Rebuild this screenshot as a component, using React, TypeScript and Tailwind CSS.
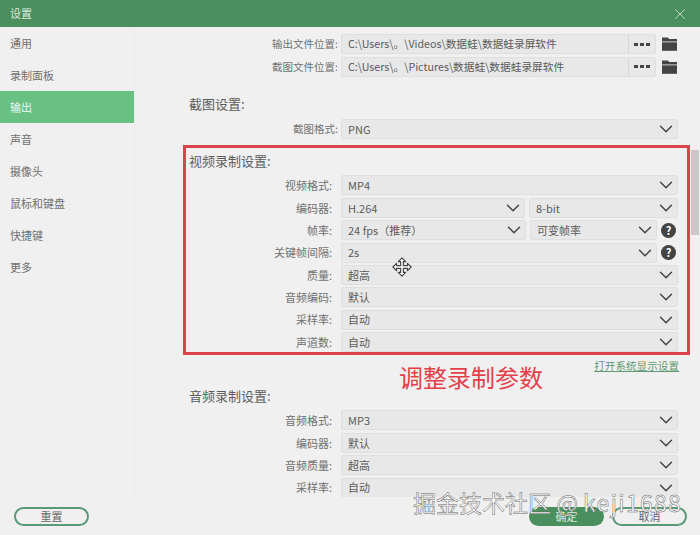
import React from "react";
import { ChevronDown, X } from "lucide-react";

const NAV = ["通用", "录制面板", "输出", "声音", "摄像头", "鼠标和键盘", "快捷键", "更多"];

const Help = () => (
	<div className="w-[15px] h-[15px] rounded-full bg-[#444444] text-white text-[11px] font-bold leading-[15px] text-center shrink-0">
		?
	</div>
);

const Folder = () => (
	<svg width="15" height="14" viewBox="0 0 15 14" className="shrink-0">
		<path d="M0 0.500h6l1 1.500h8v2.500H0z" fill="#444444" />
		<rect x="0" y="5.300" width="15" height="8.500" fill="#444444" />
	</svg>
);

const MoveCursor = () => (
	<svg width="20" height="20" viewBox="-1 -1 22 22" className="absolute left-[392px] top-[257px]">
		<polygon
			points="10,0 14,4 11.500,4 11.500,8.500 16,8.500 16,6 20,10 16,14 16,11.500 11.500,11.500 11.500,16 14,16 10,20 6,16 8.500,16 8.500,11.500 4,11.500 4,14 0,10 4,6 4,8.500 8.500,8.500 8.500,4 6,4"
			fill="#ffffff"
			stroke="#444444"
			strokeWidth="1.300"
			strokeLinejoin="round"
		/>
	</svg>
);

const Select = ({ value, className = "" }: { value: string; className?: string }) => (
	<div
		className={`h-[20px] flex items-center justify-between pl-[6px] bg-[#e8e8e8] border border-[#dfdfdf] rounded-[2px] text-[11px] text-[#5c5c5c] ${className}`}
	>
		<span>{value}</span>
		<ChevronDown size={22} strokeWidth={1.600} className="text-[#444444] -my-[2px]" />
	</div>
);

// labels of the top block sit closer to the fields than the ones in the recording blocks
const Row = ({ label, wide, children }: { label: string; wide?: boolean; children: React.ReactNode }) => (
	<div className="h-[22.4px] flex items-center">
		<div
			className={
				wide
					? "w-[197px] mr-[9px] text-right text-[11px] text-[#707070] shrink-0"
					: "w-[203px] mr-[3px] text-right text-[10.5px] text-[#707070] shrink-0"
			}
		>
			{label}:
		</div>
		<div className="flex-1 flex items-center min-w-0">{children}</div>
	</div>
);

const PathRow = ({ label, value }: { label: string; value: string }) => (
	<Row label={label}>
		<div className="w-[315px] h-[20px] flex items-center bg-[#e8e8e8] border border-[#dfdfdf] rounded-[2px] text-[10.7px] text-[#5c5c5c]">
			<span className="flex-1 pl-[6px]">{value}</span>
			<div className="w-[27px] h-full border-l border-[#d6d6d6] flex items-center justify-center gap-[2px]">
				<i className="w-[4px] h-[3px] bg-[#444444]" />
				<i className="w-[4px] h-[3px] bg-[#444444]" />
				<i className="w-[4px] h-[3px] bg-[#444444]" />
			</div>
		</div>
		<div className="ml-[6px]">
			<Folder />
		</div>
	</Row>
);

const Heading = ({ text, className = "" }: { text: string; className?: string }) => (
	<div className={`h-[20px] pl-[54px] text-[13px] leading-[18px] text-[#5c5c5c] ${className}`}>{text}:</div>
);

const App = () => {
	return (
		<div className="relative w-[700px] h-[535px] overflow-hidden flex flex-col bg-[#f0f0f0] font-['Noto_Sans_CJK_SC','Noto_Sans',sans-serif]">
			<div className="h-[27px] shrink-0 bg-[#4c8f5f] flex items-center justify-between pl-[10px] pr-[11px] text-white text-[11px]">
				<span className="text-[#d8eadd]">设置</span>
				<X size={18} strokeWidth={1} className="text-[#d8eadd]" />
			</div>

			<div className="h-[470px] shrink-0 flex overflow-hidden">
				<div className="w-[135px] shrink-0 border-r border-[#ebebeb]">
					{NAV.map((item) => (
						<div
							key={item}
							className={`h-[32px] w-[134px] pl-[10px] flex items-center text-[11px] ${
								item === "输出" ? "bg-[#68c183] text-[#eef8f1]" : "text-[#707070]"
							}`}
						>
							{item}
						</div>
					))}
				</div>

				<div className="flex-1 pr-[22px] pt-[6px] min-w-0">
					<PathRow label="输出文件位置" value="C:\Users\。\Videos\数据蛙\数据蛙录屏软件" />
					<PathRow label="截图文件位置" value="C:\Users\。\Pictures\数据蛙\数据蛙录屏软件" />

					<Heading text="截图设置" className="mt-[17px]" />
					<div className="mt-[3px]">
						<Row label="截图格式">
							<Select value="PNG" className="flex-1" />
						</Row>
					</div>

					<Heading text="视频录制设置" className="mt-[12px]" />
					<div className="mt-[2px]">
						<Row wide label="视频格式">
							<Select value="MP4" className="flex-1" />
						</Row>
						<Row wide label="编码器">
							<Select value="H.264" className="w-[184px]" />
							<Select value="8-bit" className="ml-[4px] flex-1" />
						</Row>
						<Row wide label="帧率">
							<Select value="24 fps（推荐）" className="w-[185px]" />
							<Select value="可变帧率" className="ml-[4px] w-[127px]" />
							<div className="ml-[4px]">
								<Help />
							</div>
						</Row>
						<Row wide label="关键帧间隔">
							<Select value="2s" className="w-[316px]" />
							<div className="ml-[4px]">
								<Help />
							</div>
						</Row>
						<Row wide label="质量">
							<Select value="超高" className="flex-1" />
						</Row>
						<Row wide label="音频编码">
							<Select value="默认" className="flex-1" />
						</Row>
						<Row wide label="采样率">
							<Select value="自动" className="flex-1" />
						</Row>
						<Row wide label="声道数">
							<Select value="自动" className="flex-1" />
						</Row>
					</div>

					<div className="mt-[6px] -mr-[1px] h-[14px] text-right text-[10.6px] leading-[14px] text-[#5f9a72] underline">
						打开系统显示设置
					</div>

					<Heading text="音频录制设置" className="mt-[14px]" />
					<div className="mt-[2px]">
						<Row wide label="音频格式">
							<Select value="MP3" className="flex-1" />
						</Row>
						<Row wide label="编码器">
							<Select value="默认" className="flex-1" />
						</Row>
						<Row wide label="音频质量">
							<Select value="超高" className="flex-1" />
						</Row>
						<Row wide label="采样率">
							<Select value="自动" className="flex-1" />
						</Row>
					</div>
				</div>
			</div>

			<div className="flex-1 flex items-center justify-between pl-[14px] pr-[13px]">
				<button className="w-[75px] h-[19px] rounded-full border-2 border-[#5a9a78] text-[11px] leading-none text-[#666666]">
					重置
				</button>
				<div className="flex gap-[8px]">
					<button className="w-[75px] h-[19px] rounded-full bg-[#4c8f5f] text-[11px] leading-none text-[#d8eadd]">
						确定
					</button>
					<button className="w-[75px] h-[19px] rounded-full border-2 border-[#5a9a78] text-[11px] leading-none text-[#666666]">
						取消
					</button>
				</div>
			</div>

			{/* annotation layer */}
			<div className="absolute left-[691px] top-[150px] w-[8px] h-[85px] bg-[#c9c9c9]" />
			<div className="absolute left-[183px] top-[145px] w-[507px] h-[210px] border-[3px] border-[#d9434a]" />
			<div className="absolute left-[399px] top-[359px] text-[24px] leading-[36px] text-[#e5404a]">调整录制参数</div>
			<MoveCursor />
			<div className="absolute left-[413px] top-[485px] text-[23px] leading-[34px] whitespace-nowrap text-white [-webkit-text-stroke:0.5px_#666666]">
				掘金技术社区 @ <span className="tracking-[1.300px]">keji1688</span>
			</div>
		</div>
	);
};

export default App;
